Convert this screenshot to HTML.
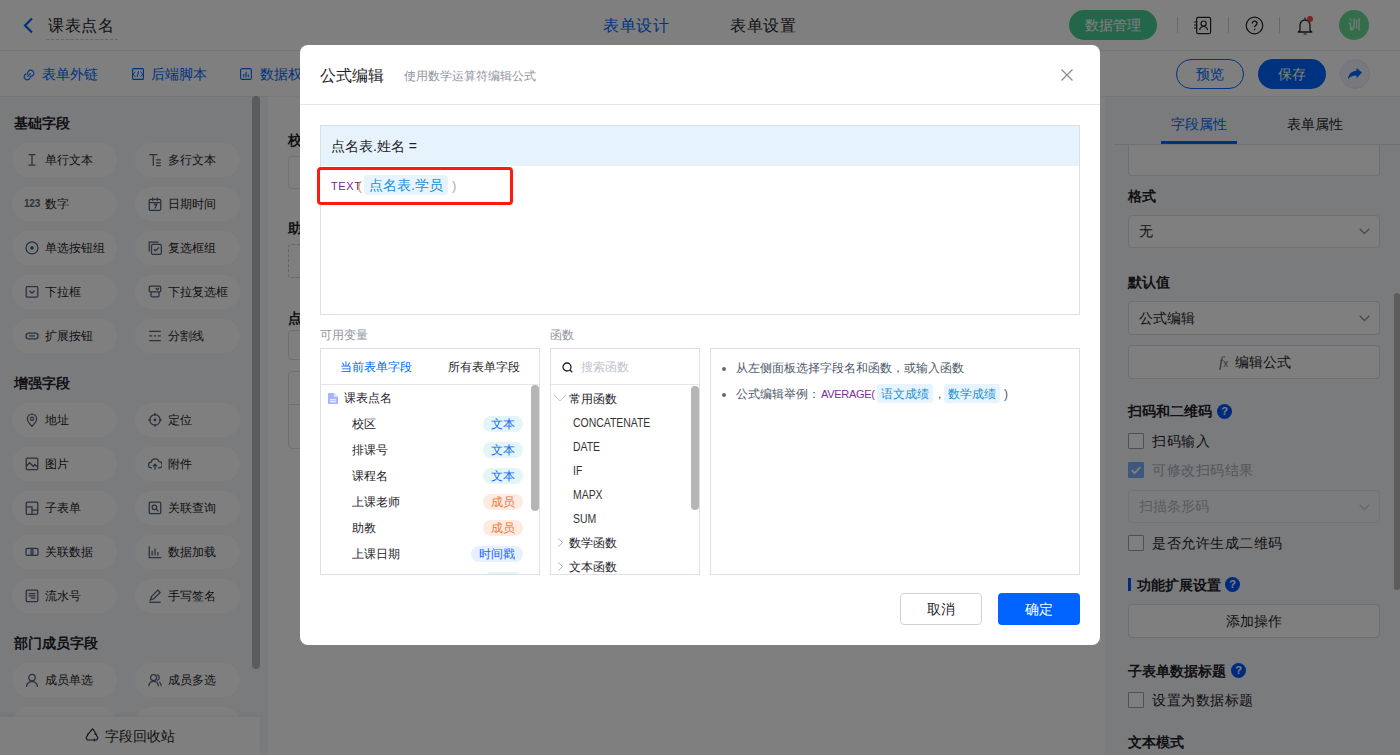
<!DOCTYPE html>
<html><head><meta charset="utf-8">
<style>
*{box-sizing:border-box;margin:0;padding:0}
html,body{width:1400px;height:755px;overflow:hidden;background:#fff;font-family:"Liberation Sans",sans-serif;color:#1f2329}
.a{position:absolute}
.t{position:absolute;white-space:nowrap;line-height:20px}
svg{display:block}
/* header */
#hdr{position:absolute;left:0;top:0;width:1400px;height:51px;background:#fff;border-bottom:1px solid #e8e8e8}
#tb{position:absolute;left:0;top:51px;width:1400px;height:45px;background:#fff}
#side{position:absolute;left:0;top:96px;width:268px;height:659px;background:#f4f6f9}
.sec{position:absolute;left:14px;font-size:14px;font-weight:bold;line-height:20px;color:#1f2329}
.chip{position:absolute;width:105px;height:34px;border-radius:17px;background:#fff;font-size:12px;line-height:34px;padding-left:33px;color:#1f2329;white-space:nowrap}
.chip svg{position:absolute;left:15px;top:10px}
#canvas{position:absolute;left:268px;top:96px;width:838px;height:659px;background:#fff}
#right{position:absolute;left:1106px;top:96px;width:294px;height:659px;background:#f5f6f9;border-left:1px solid #eef0f3}
.lbl{position:absolute;left:21px;font-size:14px;font-weight:bold;line-height:20px;white-space:nowrap}
.inp{position:absolute;left:21px;width:252px;background:#fff;border:1px solid #dcdfe6;border-radius:4px;font-size:14px;white-space:nowrap}
.cb{position:absolute;left:21px;width:16px;height:16px;border:1px solid #9aa0a8;border-radius:1px;background:#fff}
.cbt{position:absolute;left:45px;font-size:14px;line-height:20px;white-space:nowrap;letter-spacing:.5px}
.q{position:absolute;width:15px;height:15px;border-radius:50%;background:#0055ff;color:#fff;font-size:11px;font-weight:bold;line-height:15px;text-align:center}
#mask{position:absolute;left:0;top:0;width:1400px;height:755px;background:rgba(0,0,0,.5)}
#modal{position:absolute;left:300px;top:45px;width:800px;height:600px;background:#fff;border-radius:8px}
.pbox{position:absolute;border:1px solid #dcdfe6;background:#fff;overflow:hidden}
.badge{position:absolute;left:162px;height:16px;border-radius:8px;font-size:12px;line-height:16px;text-align:center}
.row{position:absolute;font-size:12px;line-height:20px;white-space:nowrap;color:#1f2329}
</style></head><body>

<!-- HEADER -->
<div id="hdr">
  <svg class="a" style="left:22px;top:17px" width="14" height="17" viewBox="0 0 14 17"><polyline points="10,1.5 3,8.5 10,15.5" fill="none" stroke="#0066ff" stroke-width="2.2"/></svg>
  <div class="t" style="left:48px;top:15px;font-size:16px;letter-spacing:.6px;line-height:22px;color:#1f2329">课表点名</div>
  <div class="a" style="left:46px;top:39px;width:72px;border-top:1px dashed #c9cdd4"></div>
  <div class="t" style="left:603px;top:15px;font-size:16px;letter-spacing:.6px;line-height:22px;color:#0066ff">表单设计</div>
  <div class="t" style="left:730px;top:15px;font-size:16px;letter-spacing:.6px;line-height:22px;color:#1f2329">表单设置</div>
  <div class="a" style="left:1069px;top:10px;width:88px;height:30px;border-radius:15px;background:#48cc94;color:#fff;font-size:14px;line-height:30px;text-align:center">数据管理</div>
  <div class="a" style="left:1177px;top:17px;width:1px;height:16px;background:#d0d3d6"></div>
  <div class="a" style="left:1228px;top:17px;width:1px;height:16px;background:#d0d3d6"></div>
  <div class="a" style="left:1279px;top:17px;width:1px;height:16px;background:#d0d3d6"></div>
  <svg class="a" style="left:1192px;top:16px" width="21" height="19" viewBox="0 0 21 19"><rect x="4.6" y="1.4" width="14" height="16.2" rx="1.5" fill="none" stroke="#1f2329" stroke-width="1.2"/><circle cx="11.6" cy="7.6" r="2.6" fill="none" stroke="#1f2329" stroke-width="1.2"/><path d="M7.6 14.2c.5-2.5 2-3.7 4-3.7s3.5 1.2 4 3.7" fill="none" stroke="#1f2329" stroke-width="1.2"/><path d="M2 6h3.6M2 9h3.6M2 12h3.6" stroke="#1f2329" stroke-width="1.1"/></svg>
  <svg class="a" style="left:1245px;top:16px" width="19" height="19" viewBox="0 0 19 19"><circle cx="9.5" cy="9.5" r="8.3" fill="none" stroke="#1f2329" stroke-width="1.2"/><path d="M7.2 7.6c0-1.4 1-2.4 2.4-2.4s2.4.9 2.4 2.2c0 1.8-2.4 1.9-2.4 3.8" fill="none" stroke="#1f2329" stroke-width="1.3"/><circle cx="9.6" cy="13.6" r=".8" fill="#1f2329"/></svg>
  <svg class="a" style="left:1295px;top:14px" width="20" height="22" viewBox="0 0 20 22"><path d="M5 16.5V11a5 5 0 0 1 10 0v5.5l1.8 1.5H3.2z" fill="none" stroke="#1f2329" stroke-width="1.3" stroke-linejoin="round"/><path d="M8.5 20h3M10 3.5v2" stroke="#1f2329" stroke-width="1.2"/><circle cx="15" cy="5" r="3" fill="#f54a45"/></svg>
  <div class="a" style="left:1339px;top:10px;width:30px;height:30px;border-radius:50%;background:#66da94;color:#fff;font-size:13px;line-height:30px;text-align:center">训</div>
</div>

<!-- TOOLBAR -->
<div id="tb">
  <svg class="a" style="left:22px;top:17px" width="14" height="14" viewBox="0 0 14 14"><path d="M8.6 8.3A3.1 3.1 0 1 0 5.7 5.4M5.4 5.7A3.1 3.1 0 1 0 8.3 8.6M5.6 8.4l2.8-2.8" fill="none" stroke="#0066ff" stroke-width="1.1" stroke-linecap="round"/></svg>
  <div class="t" style="left:42px;top:13px;font-size:14px;color:#0066ff">表单外链</div>
  <svg class="a" style="left:132px;top:17px" width="12" height="12" viewBox="0 0 12 12"><rect x=".6" y=".6" width="10.8" height="10.8" rx="1" fill="none" stroke="#0066ff" stroke-width="1.1"/><path d="M3.6 3.8L1 6.3l2.6 2.4M8.4 3.8L11 6.3 8.4 8.7M6.6 3.2L5.2 9" fill="none" stroke="#0066ff" stroke-width="1"/></svg>
  <div class="t" style="left:151px;top:13px;font-size:14px;color:#0066ff">后端脚本</div>
  <svg class="a" style="left:240px;top:17px" width="12" height="12" viewBox="0 0 12 12"><rect x=".6" y=".6" width="10.8" height="10.8" rx="1.5" fill="none" stroke="#0066ff" stroke-width="1.1"/><path d="M3.7 9.2V6M6 9.2V3.8M8.3 9.2V6.6" stroke="#0066ff" stroke-width="1.1"/></svg>
  <div class="t" style="left:260px;top:13px;font-size:14px;color:#0066ff">数据权限</div>
  <div class="a" style="left:1176px;top:8px;width:68px;height:30px;border:1px solid #0066ff;border-radius:15px;color:#0066ff;font-size:14px;line-height:28px;text-align:center">预览</div>
  <div class="a" style="left:1258px;top:8px;width:68px;height:30px;border-radius:15px;background:#0066ff;color:#fff;font-size:14px;line-height:30px;text-align:center">保存</div>
  <div class="a" style="left:1340px;top:8px;width:30px;height:30px;border-radius:50%;background:#eef3fc;border:1px solid #dde6f5"></div>
  <svg class="a" style="left:1347px;top:16px" width="16" height="14" viewBox="0 0 16 14"><path d="M15 5.5L9.5 1v2.8C4.5 4 1.5 7 1 12.5c1.6-2.8 4.2-4 8.5-4v2.8z" fill="#0066ff"/></svg>
</div>

<!-- SIDEBAR -->
<div id="side">
  <div class="sec" style="top:17px">基础字段</div>
  <!--CHIPS-->
<div class="chip" style="left:12px;top:47px"><svg width="14" height="15" viewBox="0 0 12 13" style="left:13px;top:10px"><path d="M3 1.5h6M6 1.5v9M3 10.5h6" fill="none" stroke="#55617c" stroke-width="1.1"/></svg>单行文本</div>
<div class="chip" style="left:135px;top:47px"><svg width="14" height="15" viewBox="0 0 12 13" style="left:13px;top:10px"><path d="M1 1.5h7M4.5 1.5v9.5M7 6h4M7 8.5h4M7 11h4" fill="none" stroke="#55617c" stroke-width="1.1"/></svg>多行文本</div>
<div class="chip" style="left:12px;top:91px"><span style="position:absolute;left:12px;top:0;font-size:10px;font-weight:bold;color:#55617c;letter-spacing:-.2px">123</span>数字</div>
<div class="chip" style="left:135px;top:91px"><svg width="14" height="15" viewBox="0 0 12 13" style="left:13px;top:10px"><rect x="1" y="2" width="10" height="9.5" rx="1" fill="none" stroke="#55617c" stroke-width="1.1"/><path d="M1 4.8h10M4 .5v3M8 .5v3M5 6.5h2.5L6 10" fill="none" stroke="#55617c" stroke-width="1.1"/></svg>日期时间</div>
<div class="chip" style="left:12px;top:135px"><svg width="14" height="15" viewBox="0 0 12 13" style="left:13px;top:10px"><circle cx="6" cy="6" r="5.2" fill="none" stroke="#55617c" stroke-width="1.1"/><circle cx="6" cy="6" r="1.6" fill="#55617c"/></svg>单选按钮组</div>
<div class="chip" style="left:135px;top:135px"><svg width="14" height="15" viewBox="0 0 12 13" style="left:13px;top:10px"><path d="M1 9V1h8" fill="none" stroke="#55617c" stroke-width="1.1"/><rect x="3" y="3" width="8.5" height="8.5" rx="1" fill="none" stroke="#55617c" stroke-width="1.1"/><path d="M5 7l1.5 1.5L9.5 5.5" fill="none" stroke="#55617c" stroke-width="1.1"/></svg>复选框组</div>
<div class="chip" style="left:12px;top:179px"><svg width="14" height="15" viewBox="0 0 12 13" style="left:13px;top:10px"><rect x="1" y="1.5" width="10" height="9" rx="1" fill="none" stroke="#55617c" stroke-width="1.1"/><path d="M3.8 5l2.2 2 2.2-2" fill="none" stroke="#55617c" stroke-width="1.1"/></svg>下拉框</div>
<div class="chip" style="left:135px;top:179px"><svg width="14" height="15" viewBox="0 0 12 13" style="left:13px;top:10px"><rect x="1" y="1" width="10" height="5" rx="1" fill="none" stroke="#55617c" stroke-width="1.1"/><path d="M6.6 2.6l1.4 1.6 1.4-1.6M2.5 6v3.3a1 1 0 0 0 1 1h5a1 1 0 0 0 1-1V6" fill="none" stroke="#55617c" stroke-width="1.1"/></svg>下拉复选框</div>
<div class="chip" style="left:12px;top:223px"><svg width="14" height="15" viewBox="0 0 12 13" style="left:13px;top:10px"><rect x=".8" y="3.5" width="10.5" height="5" rx="2.5" fill="none" stroke="#55617c" stroke-width="1.1"/><path d="M3.5 6h5" fill="none" stroke="#55617c" stroke-width="1.1"/></svg>扩展按钮</div>
<div class="chip" style="left:135px;top:223px"><svg width="14" height="15" viewBox="0 0 12 13" style="left:13px;top:10px"><path d="M1 2h10M1 6h2.5M5 6h2M8.5 6H11M1 10h10" fill="none" stroke="#55617c" stroke-width="1.1"/></svg>分割线</div>
<div class="chip" style="left:12px;top:307px"><svg width="14" height="15" viewBox="0 0 12 13" style="left:13px;top:10px"><path d="M6 11.5S2 7.6 2 5a4 4 0 0 1 8 0c0 2.6-4 6.5-4 6.5z" fill="none" stroke="#55617c" stroke-width="1.1"/><circle cx="6" cy="5" r="1.4" fill="none" stroke="#55617c" stroke-width="1.1"/></svg>地址</div>
<div class="chip" style="left:135px;top:307px"><svg width="14" height="15" viewBox="0 0 12 13" style="left:13px;top:10px"><circle cx="6" cy="6" r="4.5" fill="none" stroke="#55617c" stroke-width="1.1"/><circle cx="6" cy="6" r="1.2" fill="#55617c"/><path d="M6 0v2.5M6 9.5V12M0 6h2.5M9.5 6H12" fill="none" stroke="#55617c" stroke-width="1.1"/></svg>定位</div>
<div class="chip" style="left:12px;top:351px"><svg width="14" height="15" viewBox="0 0 12 13" style="left:13px;top:10px"><rect x="1" y="1" width="10" height="10" rx="1" fill="none" stroke="#55617c" stroke-width="1.1"/><path d="M1 8l3-3 3 3 1.5-1.5L11 9" fill="none" stroke="#55617c" stroke-width="1.1"/></svg>图片</div>
<div class="chip" style="left:135px;top:351px"><svg width="14" height="15" viewBox="0 0 12 13" style="left:13px;top:10px"><path d="M3.5 9.5H3a2.5 2.5 0 0 1-.3-5A3.5 3.5 0 0 1 9.5 4a2.7 2.7 0 0 1 0 5.5H8.5M6 11V6.5M4.3 8L6 6.3 7.7 8" fill="none" stroke="#55617c" stroke-width="1.1"/></svg>附件</div>
<div class="chip" style="left:12px;top:395px"><svg width="14" height="15" viewBox="0 0 12 13" style="left:13px;top:10px"><rect x="1" y="1" width="10" height="10.5" rx="1" fill="none" stroke="#55617c" stroke-width="1.1"/><path d="M1 5h5v6.5M6 8h5" fill="none" stroke="#55617c" stroke-width="1.1"/></svg>子表单</div>
<div class="chip" style="left:135px;top:395px"><svg width="14" height="15" viewBox="0 0 12 13" style="left:13px;top:10px"><rect x="1" y="1" width="10" height="10" rx="1" fill="none" stroke="#55617c" stroke-width="1.1"/><circle cx="5.5" cy="5.5" r="2" fill="none" stroke="#55617c" stroke-width="1.1"/><path d="M7 7l2 2" fill="none" stroke="#55617c" stroke-width="1.1"/></svg>关联查询</div>
<div class="chip" style="left:12px;top:439px"><svg width="14" height="15" viewBox="0 0 12 13" style="left:13px;top:10px"><rect x=".8" y="3" width="6" height="6" rx="1" fill="none" stroke="#55617c" stroke-width="1.1"/><rect x="5.2" y="3" width="6" height="6" rx="1" fill="none" stroke="#55617c" stroke-width="1.1"/></svg>关联数据</div>
<div class="chip" style="left:135px;top:439px"><svg width="14" height="15" viewBox="0 0 12 13" style="left:13px;top:10px"><path d="M1 1v10h10.5M3.5 9V5M6 9V3M8.5 9V6" fill="none" stroke="#55617c" stroke-width="1.1"/></svg>数据加载</div>
<div class="chip" style="left:12px;top:483px"><svg width="14" height="15" viewBox="0 0 12 13" style="left:13px;top:10px"><rect x="1" y="1" width="10" height="10" rx="1" fill="none" stroke="#55617c" stroke-width="1.1"/><path d="M3 4h6M3 6h6M5 8h4" fill="none" stroke="#55617c" stroke-width="1.1"/></svg>流水号</div>
<div class="chip" style="left:135px;top:483px"><svg width="14" height="15" viewBox="0 0 12 13" style="left:13px;top:10px"><path d="M2 9.5l1-3L8.5 1l2 2L5 8.5z" fill="none" stroke="#55617c" stroke-width="1.1"/><path d="M1 11.5h10" fill="none" stroke="#55617c" stroke-width="1.1"/></svg>手写签名</div>
<div class="chip" style="left:12px;top:567px"><svg width="14" height="15" viewBox="0 0 12 13" style="left:13px;top:10px"><circle cx="6" cy="4" r="2.8" fill="none" stroke="#55617c" stroke-width="1.1"/><path d="M1.2 12c.3-3 2.2-4.6 4.8-4.6s4.5 1.6 4.8 4.6" fill="none" stroke="#55617c" stroke-width="1.1"/></svg>成员单选</div>
<div class="chip" style="left:135px;top:567px"><svg width="14" height="15" viewBox="0 0 12 13" style="left:13px;top:10px"><circle cx="4.8" cy="4" r="2.6" fill="none" stroke="#55617c" stroke-width="1.1"/><path d="M.6 11.5C.9 8.8 2.5 7.3 4.8 7.3S8.7 8.8 9 11.5M7.8 1.5a2.6 2.6 0 0 1 0 5M9.8 7.8c1 .8 1.5 2 1.7 3.7" fill="none" stroke="#55617c" stroke-width="1.1"/></svg>成员多选</div>
<div class="chip" style="left:12px;top:611px"><svg width="14" height="15" viewBox="0 0 12 13" style="left:13px;top:10px"><circle cx="6" cy="4" r="2.8" fill="none" stroke="#55617c" stroke-width="1.1"/><path d="M1.2 12c.3-3 2.2-4.6 4.8-4.6s4.5 1.6 4.8 4.6" fill="none" stroke="#55617c" stroke-width="1.1"/></svg>部门单选</div>
<div class="chip" style="left:135px;top:611px"><svg width="14" height="15" viewBox="0 0 12 13" style="left:13px;top:10px"><circle cx="4.8" cy="4" r="2.6" fill="none" stroke="#55617c" stroke-width="1.1"/><path d="M.6 11.5C.9 8.8 2.5 7.3 4.8 7.3S8.7 8.8 9 11.5M7.8 1.5a2.6 2.6 0 0 1 0 5M9.8 7.8c1 .8 1.5 2 1.7 3.7" fill="none" stroke="#55617c" stroke-width="1.1"/></svg>部门多选</div>
<!--/CHIPS-->
  <div class="sec" style="top:277px">增强字段</div>
  <div class="sec" style="top:537px">部门成员字段</div>
  <div class="a" style="left:252px;top:0;width:8px;height:573px;border-radius:4px;background:#b8b9bb"></div>
  <div class="a" style="left:0;top:621px;width:260px;height:38px;background:#fefefe;box-shadow:0 -2px 6px rgba(0,0,0,.05)">
    <svg class="a" style="left:85px;top:11px" width="15" height="14" viewBox="0 0 15 14"><path d="M5.6 3.2L7.5 .8l1.9 2.4M11 6.5l1.9 3.3-1.1 2.2H9M4 12H2.2L1.1 9.8 3 6.5M9.4 3.2l1.6 3.3M4 12h5M5.6 3.2L3 6.5" fill="none" stroke="#1f2329" stroke-width="1.1" stroke-linejoin="round"/><path d="M9.7 10.6L9 12l.9 1.3M12.1 5.4l-1.1 1.1-1.5-.3M2.2 6.2l.8.3.3-1.5" fill="none" stroke="#1f2329" stroke-width="1"/></svg>
    <div class="t" style="left:105px;top:9px;font-size:14px">字段回收站</div>
  </div>
</div>

<!-- CANVAS -->
<div id="canvas">
  <div class="t" style="left:20px;top:34px;font-size:14px;font-weight:bold">校区</div>
  <div class="a" style="left:20px;top:60px;width:800px;height:33px;border:1px solid #e5e6eb;border-radius:4px"></div>
  <div class="t" style="left:20px;top:122px;font-size:14px;font-weight:bold">助教</div>
  <div class="a" style="left:20px;top:148px;width:800px;height:34px;border:1px dashed #c5c8ce;border-radius:4px"></div>
  <div class="t" style="left:20px;top:212px;font-size:14px;font-weight:bold">点名表</div>
  <div class="a" style="left:20px;top:234px;width:800px;height:30px;border:1px solid #dcdfe6;border-radius:4px"></div>
  <div class="a" style="left:20px;top:275px;width:800px;height:78px;border:1px solid #dcdfe6;border-radius:4px"></div>
  <div class="a" style="left:20px;top:308px;width:800px;height:1px;background:#dcdfe6"></div>
</div>

<!-- RIGHT PANEL -->
<div id="right">
  <div class="t" style="left:64px;top:18px;font-size:14px;color:#0066ff">字段属性</div>
  <div class="t" style="left:180px;top:18px;font-size:14px;color:#1f2329">表单属性</div>
  <div class="a" style="left:7px;top:48px;width:286px;height:1px;background:#dfe1e5"></div>
  <div class="a" style="left:54px;top:45px;width:76px;height:3px;background:#0066ff"></div>
  <div class="inp" style="top:49px;height:31px;border-top:none;border-radius:0 0 4px 4px"></div>
  <div class="lbl" style="top:90px">格式</div>
  <div class="inp" style="top:119px;height:33px;line-height:31px;padding-left:10px">无</div>
  <svg class="a" style="left:252px;top:132px" width="11" height="7" viewBox="0 0 11 7"><path d="M.7.7l4.8 4.8L10.3.7" fill="none" stroke="#8f959e" stroke-width="1.3"/></svg>
  <div class="lbl" style="top:176px">默认值</div>
  <div class="inp" style="top:205px;height:34px;line-height:32px;padding-left:10px">公式编辑</div>
  <svg class="a" style="left:252px;top:219px" width="11" height="7" viewBox="0 0 11 7"><path d="M.7.7l4.8 4.8L10.3.7" fill="none" stroke="#8f959e" stroke-width="1.3"/></svg>
  <div class="inp" style="top:249px;height:34px;line-height:32px;text-align:center;padding-left:18px">编辑公式</div>
  <div class="t" style="left:112px;top:256px;font-size:15px;font-style:italic;font-family:'Liberation Serif',serif;color:#646a73">f<span style="font-size:10px;font-style:normal;font-family:'Liberation Sans',sans-serif">x</span></div>
  <div class="lbl" style="top:305px">扫码和二维码</div>
  <div class="q" style="left:110px;top:308px">?</div>
  <div class="cb" style="top:337px"></div>
  <div class="cbt" style="top:335px">扫码输入</div>
  <div class="cb" style="top:366px;background:#7ab0ff;border-color:#7ab0ff"><svg width="14" height="14" viewBox="0 0 14 14"><path d="M2.6 7.2l3 3 5.6-6" fill="none" stroke="#fff" stroke-width="1.8"/></svg></div>
  <div class="cbt" style="top:364px;color:#a9aeb8">可修改扫码结果</div>
  <div class="inp" style="top:394px;height:33px;line-height:31px;padding-left:10px;background:#f7f8fa;border-color:#e5e6eb;color:#b3b8bf">扫描条形码</div>
  <svg class="a" style="left:252px;top:408px" width="11" height="7" viewBox="0 0 11 7"><path d="M.7.7l4.8 4.8L10.3.7" fill="none" stroke="#c9cdd4" stroke-width="1.3"/></svg>
  <div class="cb" style="top:439px"></div>
  <div class="cbt" style="top:437px">是否允许生成二维码</div>
  <div class="a" style="left:21px;top:482px;width:3px;height:13px;background:#0055ff"></div>
  <div class="lbl" style="left:30px;top:479px">功能扩展设置</div>
  <div class="q" style="left:118px;top:481px">?</div>
  <div class="inp" style="top:508px;height:34px;line-height:32px;text-align:center">添加操作</div>
  <div class="lbl" style="top:565px">子表单数据标题</div>
  <div class="q" style="left:124px;top:567px">?</div>
  <div class="cb" style="top:596px"></div>
  <div class="cbt" style="top:594px">设置为数据标题</div>
  <div class="lbl" style="top:636px">文本模式</div>
  <div class="a" style="left:287px;top:197px;width:6px;height:297px;border-radius:3px;background:#b8b9bb"></div>
</div>

<div class="a" style="left:0;top:96px;width:1400px;height:1px;background:rgba(0,0,0,.05)"></div>
<div id="mask"></div>

<!-- MODAL -->
<div id="modal">
  <div class="t" style="left:20px;top:20px;font-size:16px;line-height:22px;color:#1f2329">公式编辑</div>
  <div class="t" style="left:104px;top:21px;font-size:12px;line-height:20px;color:#8f959e">使用数学运算符编辑公式</div>
  <svg class="a" style="left:760px;top:23px" width="14" height="14" viewBox="0 0 14 14"><path d="M1.5 1.5l11 11M12.5 1.5l-11 11" stroke="#888c92" stroke-width="1.2"/></svg>
  <div class="a" style="left:0;top:59px;width:800px;height:1px;background:#e5e6eb"></div>
  <!-- editor -->
  <div class="a" style="left:20px;top:80px;width:760px;height:190px;border:1px solid #dcdfe6"></div>
  <div class="a" style="left:21px;top:81px;width:758px;height:40px;background:#e6f3fd"></div>
  <div class="t" style="left:31px;top:91px;font-size:14px;color:#1f2329">点名表.姓名 =</div>
  <div class="a" style="left:17px;top:122px;width:196px;height:38px;border:3px solid #ff1a0d;border-radius:4px;background:#fff"></div>
  <div class="t" style="left:31px;top:131px;font-size:11px;color:#6f2a96;letter-spacing:.6px">TEXT</div>
  <div class="t" style="left:57.5px;top:131px;font-size:13px;color:#d49250">(</div>
  <div class="a" style="left:64px;top:130px;width:84px;height:20px;border-radius:3px;background:#e8f4fd"></div>
  <div class="t" style="left:69px;top:130px;font-size:14px;color:#1890d6">点名表.学员</div>
  <div class="t" style="left:152px;top:131px;font-size:13px;color:#a8a8a8">)</div>
  <!-- labels -->
  <div class="t" style="left:20px;top:280px;font-size:12px;color:#8f959e">可用变量</div>
  <div class="t" style="left:250px;top:280px;font-size:12px;color:#8f959e">函数</div>
  <!-- var panel -->
  <div class="pbox" style="left:20px;top:303px;width:220px;height:227px">
    <div class="t" style="left:19px;top:8px;font-size:12px;color:#0066ff">当前表单字段</div>
    <div class="t" style="left:127px;top:8px;font-size:12px;color:#1f2329">所有表单字段</div>
    <div class="a" style="left:0;top:35px;width:220px;height:1px;background:#e5e6eb"></div>
    <svg class="a" style="left:7px;top:44px" width="10" height="11" viewBox="0 0 10 11"><path d="M0 .8A.8.8 0 0 1 .8 0H6.5L10 3.3v6.9a.8.8 0 0 1-.8.8H.8a.8.8 0 0 1-.8-.8z" fill="#a6b3ff"/><path d="M6.3 0v3.5H10" fill="#fff" stroke="#fff" stroke-width=".8" opacity=".7"/><path d="M2 6.8h6M2 8.8h6" stroke="#fff" stroke-width="1"/></svg>
    <div class="row" style="left:23px;top:39px">课表点名</div>
    <div class="row" style="left:31px;top:65px">校区</div>
    <div class="badge" style="left:162px;top:67px;width:40px;background:#e3f6f5;color:#1a66ff">文本</div>
    <div class="row" style="left:31px;top:91px">排课号</div>
    <div class="badge" style="left:162px;top:93px;width:40px;background:#e3f6f5;color:#1a66ff">文本</div>
    <div class="row" style="left:31px;top:117px">课程名</div>
    <div class="badge" style="left:162px;top:119px;width:40px;background:#e3f6f5;color:#1a66ff">文本</div>
    <div class="row" style="left:31px;top:143px">上课老师</div>
    <div class="badge" style="left:162px;top:145px;width:40px;background:#fdebe1;color:#ea7a35">成员</div>
    <div class="row" style="left:31px;top:169px">助教</div>
    <div class="badge" style="left:162px;top:171px;width:40px;background:#fdebe1;color:#ea7a35">成员</div>
    <div class="row" style="left:31px;top:195px">上课日期</div>
    <div class="badge" style="left:150px;top:197px;width:52px;background:#e7f0fe;color:#1a66ff">时间戳</div>
    <div class="badge" style="left:162px;top:223px;width:40px;background:#e3f6f5;color:#1a66ff">文本</div>
    <div class="a" style="left:210px;top:36px;width:8px;height:126px;border-radius:4px;background:#b5b5b5"></div>
  </div>
  <!-- func panel -->
  <div class="pbox" style="left:250px;top:303px;width:150px;height:227px">
    <svg class="a" style="left:11px;top:13px" width="11" height="11" viewBox="0 0 11 11"><circle cx="5" cy="5" r="4" fill="none" stroke="#1f2329" stroke-width="1.3"/><path d="M8 8l2.2 2.2" stroke="#1f2329" stroke-width="1.3"/></svg>
    <div class="t" style="left:30px;top:8px;font-size:12px;color:#c0c4cc">搜索函数</div>
    <div class="a" style="left:0;top:35px;width:150px;height:1px;background:#e5e6eb"></div>
    <svg class="a" style="left:3px;top:46px" width="12" height="7" viewBox="0 0 12 7"><path d="M.5.5l5.5 5.5 5.5-5.5" fill="none" stroke="#c2c8d2" stroke-width="1"/></svg>
    <div class="row" style="left:18px;top:40px">常用函数</div>
    <div class="row" style="left:22px;top:64px;color:#333"><span style="display:inline-block;transform:scaleX(.87);transform-origin:0 0">CONCATENATE</span></div>
    <div class="row" style="left:22px;top:88px;color:#333"><span style="display:inline-block;transform:scaleX(.87);transform-origin:0 0">DATE</span></div>
    <div class="row" style="left:22px;top:112px;color:#333"><span style="display:inline-block;transform:scaleX(.87);transform-origin:0 0">IF</span></div>
    <div class="row" style="left:22px;top:136px;color:#333"><span style="display:inline-block;transform:scaleX(.87);transform-origin:0 0">MAPX</span></div>
    <div class="row" style="left:22px;top:160px;color:#333"><span style="display:inline-block;transform:scaleX(.87);transform-origin:0 0">SUM</span></div>
    <svg class="a" style="left:7px;top:189px" width="5" height="9" viewBox="0 0 5 9"><path d="M.5.5l4 4-4 4" fill="none" stroke="#b0b4ba" stroke-width="1"/></svg>
    <div class="row" style="left:18px;top:184px">数学函数</div>
    <svg class="a" style="left:7px;top:213px" width="5" height="9" viewBox="0 0 5 9"><path d="M.5.5l4 4-4 4" fill="none" stroke="#b0b4ba" stroke-width="1"/></svg>
    <div class="row" style="left:18px;top:208px">文本函数</div>
    <div class="a" style="left:140px;top:37px;width:8px;height:124px;border-radius:4px;background:#b5b5b5"></div>
  </div>
  <!-- help panel -->
  <div class="pbox" style="left:410px;top:303px;width:370px;height:227px">
    <div class="a" style="left:11px;top:18px;width:4px;height:4px;border-radius:50%;background:#646a73"></div>
    <div class="row" style="left:25px;top:9px;color:#4e5969">从左侧面板选择字段名和函数，或输入函数</div>
    <div class="a" style="left:11px;top:44px;width:4px;height:4px;border-radius:50%;background:#646a73"></div>
    <div class="row" style="left:25px;top:35px;color:#4e5969">公式编辑举例：</div>
    <div class="row" style="left:110px;top:35px;color:#7a2d9c;font-size:11px;letter-spacing:-.3px">AVERAGE(</div>
    <div class="a" style="left:166px;top:35px;width:56px;height:19px;border-radius:3px;background:#e8f4fd"></div>
    <div class="row" style="left:170px;top:35px;color:#1890d6">语文成绩</div>
    <div class="row" style="left:227px;top:35px;color:#4e5969">,</div>
    <div class="a" style="left:233px;top:35px;width:56px;height:19px;border-radius:3px;background:#e8f4fd"></div>
    <div class="row" style="left:237px;top:35px;color:#1890d6">数学成绩</div>
    <div class="row" style="left:293px;top:35px;color:#4e5969">)</div>
  </div>
  <div class="a" style="left:600px;top:548px;width:82px;height:32px;border:1px solid #d0d3d6;border-radius:4px;font-size:14px;line-height:30px;text-align:center;color:#1f2329">取消</div>
  <div class="a" style="left:698px;top:548px;width:82px;height:32px;border-radius:4px;background:#0062ff;font-size:14px;line-height:32px;text-align:center;color:#fff">确定</div>
</div>

</body></html>
